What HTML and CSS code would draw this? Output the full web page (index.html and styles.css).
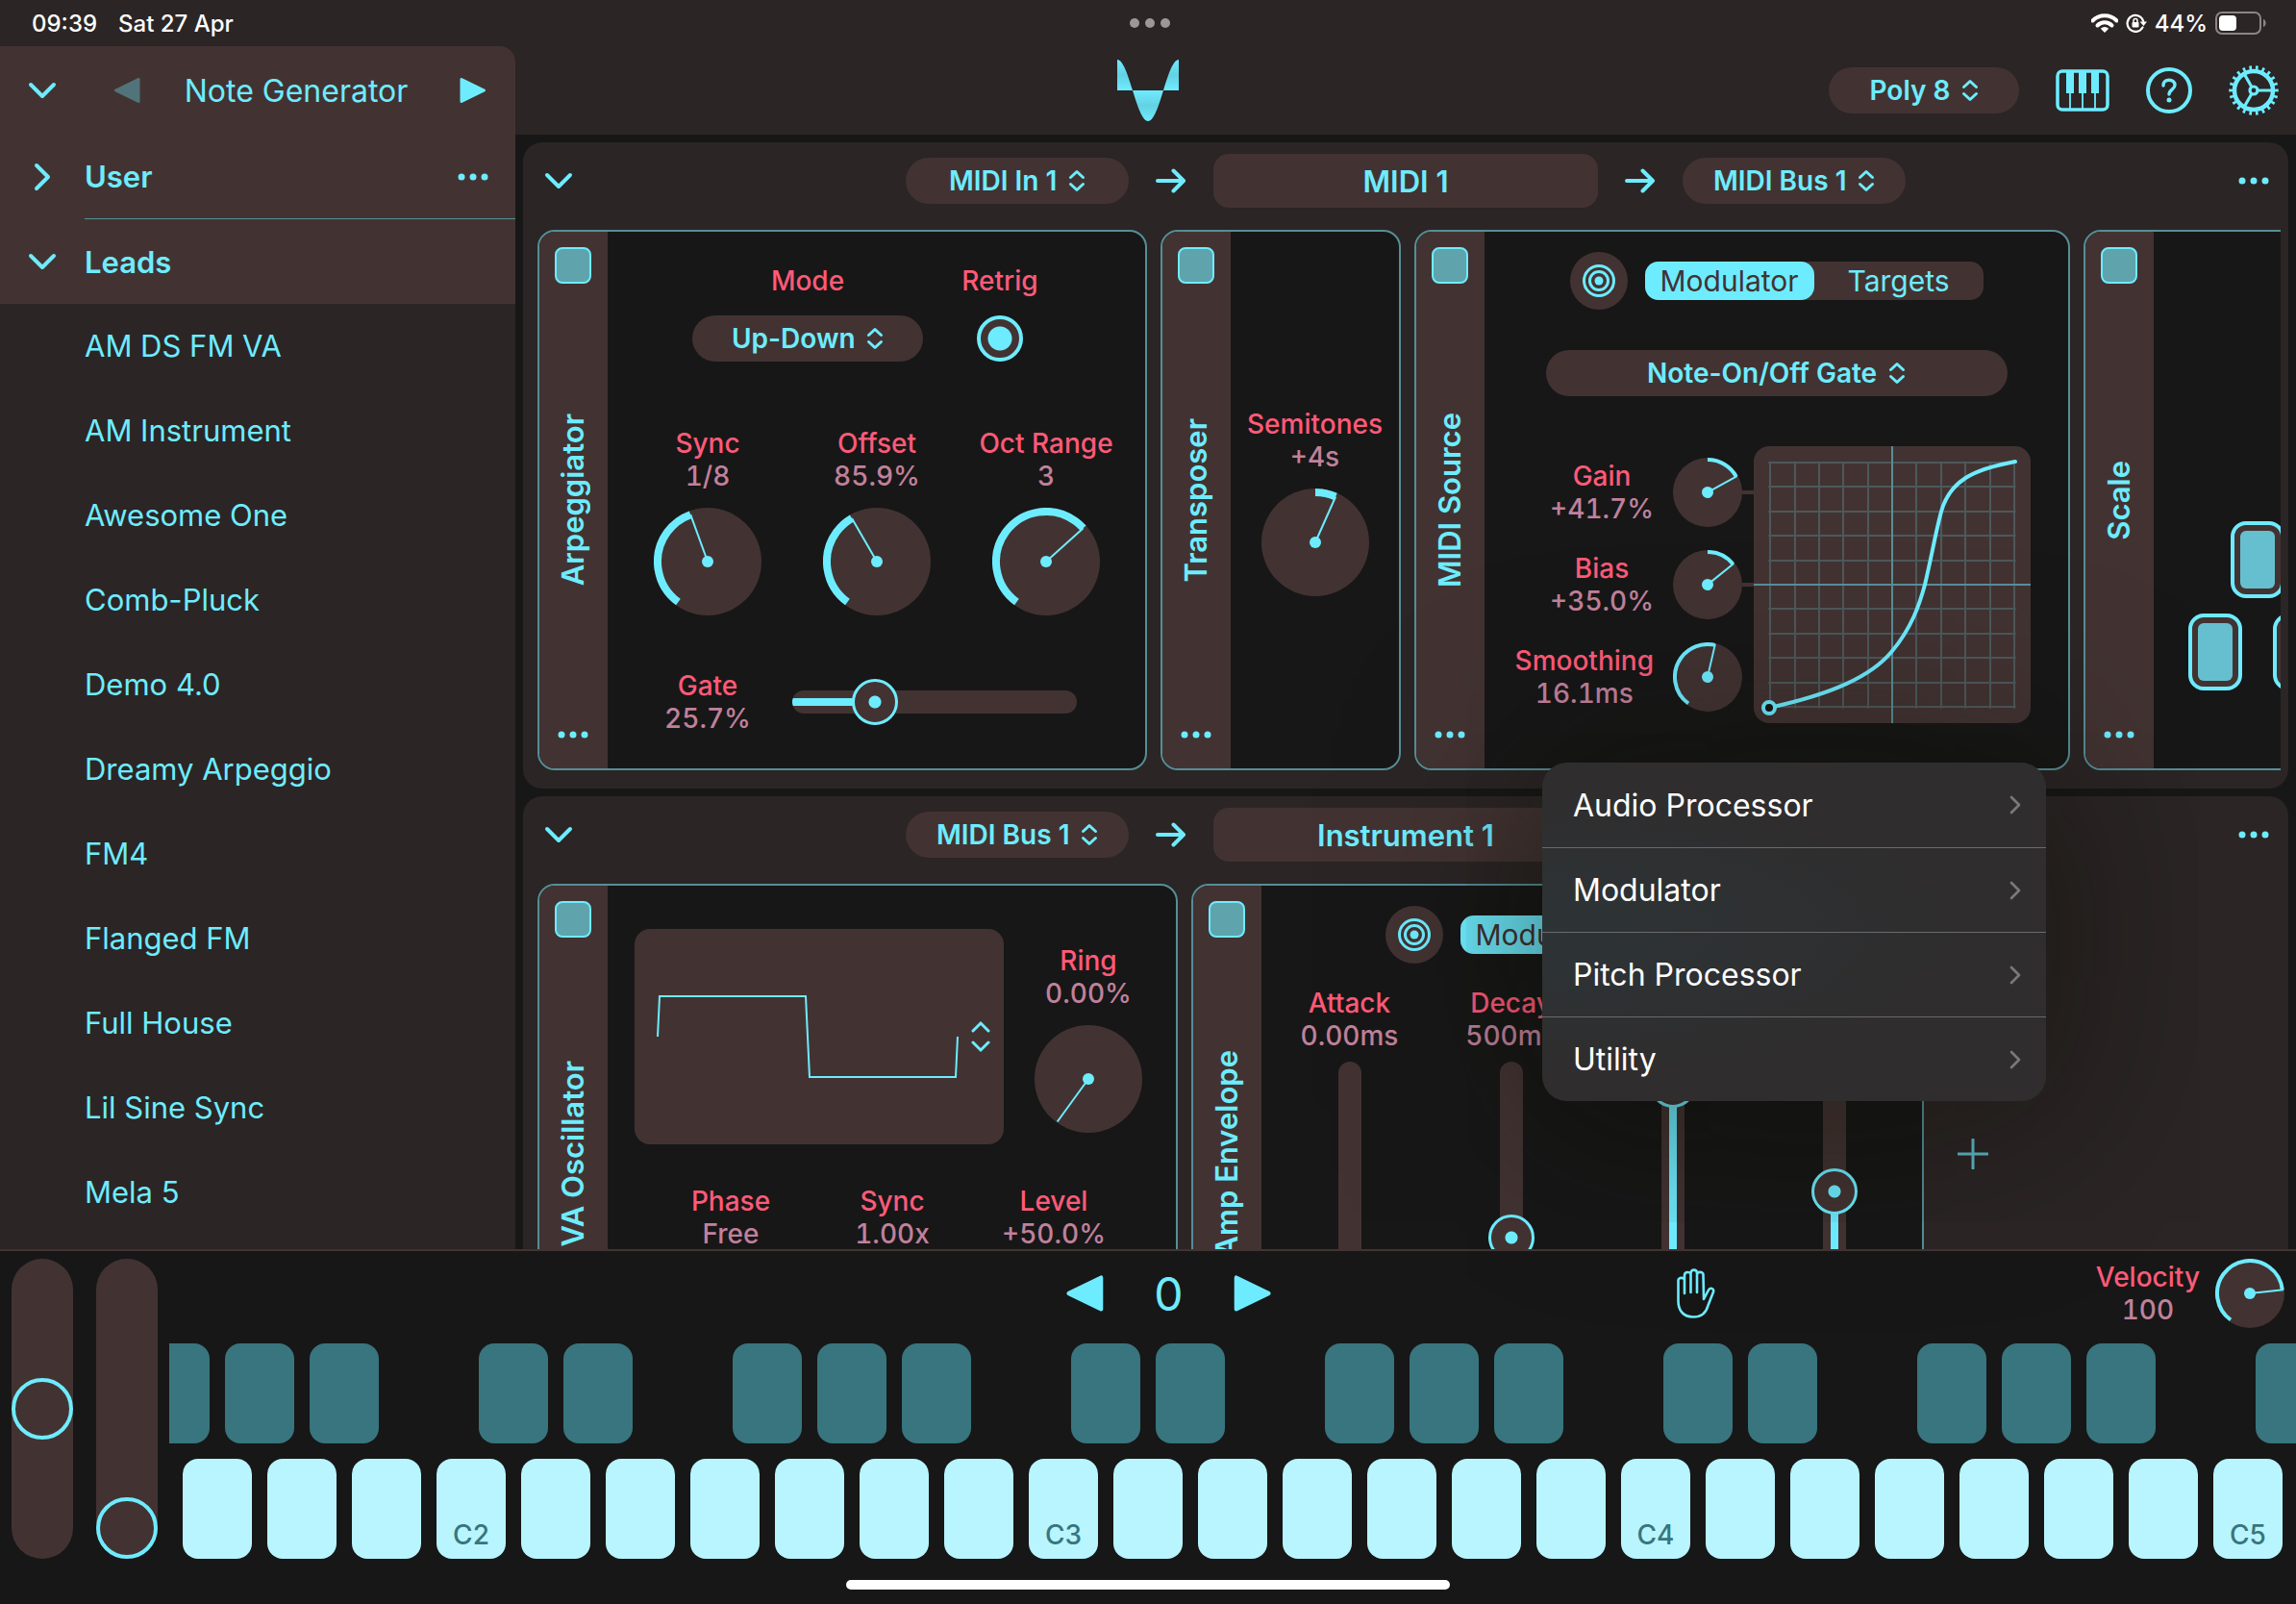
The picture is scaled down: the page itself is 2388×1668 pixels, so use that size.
FILE: index.html
```html
<!DOCTYPE html>
<html lang="en">
<head>
  <meta charset="UTF-8" />
  <meta name="viewport" content="width=device-width, initial-scale=1" />
  <title>Note Generator</title>
  <link rel="stylesheet" href="styles.css">
</head>
<body>
  <svg class="defs" width="0" height="0" aria-hidden="true">
    <symbol id="down" viewBox="0 0 30 18"><path d="M3 3l12 12L27 3" /></symbol>
    <symbol id="right" viewBox="0 0 18 30"><path d="M3 3l12 12L3 27" /></symbol>
    <symbol id="dots" viewBox="0 0 32 8"><g fill="currentColor" stroke="none"><circle cx="4" cy="4" r="3.5" /><circle cx="16" cy="4" r="3.5" /><circle cx="28" cy="4" r="3.5" /></g></symbol>
    <symbol id="updown" viewBox="0 0 18 24"><path d="M2.500 8.500L9 2.500l6.500 6M2.500 15.500l6.500 6 6.500-6" /></symbol>
    <symbol id="arrow" viewBox="0 0 32 26"><path d="M2 13h27M18.500 2.500L29 13 18.500 23.500" /></symbol>
    <symbol id="target" viewBox="0 0 36 36"><circle cx="18" cy="18" r="15.500" /><circle cx="18" cy="18" r="9.500" /><circle cx="18" cy="18" r="4.500" fill="currentColor" stroke="none" /></symbol>
    <symbol id="play" viewBox="0 0 28 28"><path d="M2 2.500v23L25.500 14z" fill="currentColor" stroke-width="3" /></symbol>
  </svg>

  <div class="status-bar">
    <div class="status-left"><span>09:39</span><span>Sat 27 Apr</span></div>
    <svg class="multitask" viewBox="0 0 42 10"><circle cx="5" cy="5" r="5" /><circle cx="21" cy="5" r="5" /><circle cx="37" cy="5" r="5" /></svg>
    <div class="status-right">
      <svg width="28" height="20" viewBox="0 0 28 20"><g fill="none" stroke="#fff" stroke-width="4"><path d="M1.500 7.500a17.500 17.500 0 0 1 25 0" /><path d="M6.500 12.500a10.500 10.500 0 0 1 15 0" /></g><path d="M14 20l-4.200-4.300a6 6 0 0 1 8.400 0z" fill="#fff" /></svg>
      <svg width="22" height="20" viewBox="0 0 22 20"><path d="M17.500 14.500A8.500 8.500 0 1 1 18.200 8" fill="none" stroke="#fff" stroke-width="2.200" /><path d="M14.500 8.500h7.500l-3.500 4.500z" fill="#fff" /><rect x="6.500" y="9" width="7" height="5.500" rx="1" fill="#fff" /><path d="M8 9V7.500a2 2 0 0 1 4 0V9" fill="none" stroke="#fff" stroke-width="1.500" /></svg>
      <span>44%</span>
      <svg width="54" height="24" viewBox="0 0 54 24"><rect x="1" y="1" width="46" height="22" rx="6" fill="none" stroke="#8b8685" stroke-width="2" /><rect x="4" y="4" width="18" height="16" rx="4" fill="#fff" /><path d="M50 8c3.500 1 3.500 7 0 8z" fill="#8b8685" /></svg>
    </div>
  </div>

  <div class="app">
    <header class="top-bar">
      <svg class="logo" viewBox="0 0 64 64">
        <defs>
          <linearGradient id="shade" x1="0" y1="0" x2="0" y2="1"><stop offset="0" stop-color="#6eecff" /><stop offset=".5" stop-color="#63d2e3" /><stop offset="1" stop-color="#6eecff" /></linearGradient>
        </defs>
        <path d="M0 0C6 0 11 16 16 32H0zM64 0c-6 0-11 16-16 32h16z" fill="url(#shade)" />
        <path d="M16 32h32C43 48 38 64 32 64S21 48 16 32z" fill="url(#shade)" />
      </svg>
      <div class="top-actions">
        <label class="picker picker-poly"><select aria-label="Polyphony"><option>Poly 8</option></select><svg class="updown"><use href="#updown" /></svg></label>
        <button class="icon-btn" aria-label="Keyboard">
          <svg width="56" height="44" viewBox="0 0 56 44"><rect x="2" y="2" width="52" height="40" rx="5" stroke-width="3.500" /><path d="M11 3h8v22h-8zM24 3h8v22h-8zM37 3h8v22h-8z" fill="currentColor" stroke="none" /><path d="M15 24v17M28 24v17M41 24v17" stroke-width="1.800" /></svg>
        </button>
        <button class="icon-btn" aria-label="Help">
          <svg width="48" height="48" viewBox="0 0 48 48"><circle cx="24" cy="24" r="22" stroke-width="4" /><path d="M18 19c0-4 2.600-5.800 6-5.800s6 2 6 5.300c0 4.500-6 4.700-6 9.500" stroke-width="3.400" /><circle cx="24" cy="34" r="2.500" fill="currentColor" stroke="none" /></svg>
        </button>
        <button class="icon-btn" aria-label="Settings">
          <svg width="52" height="52" viewBox="0 0 52 52"><circle cx="26" cy="26" r="20" stroke-width="4.500" /><circle cx="26" cy="26" r="23.500" pathLength="44" stroke-width="4.500" stroke-linecap="butt" stroke-dasharray=".8 1.2" stroke-dashoffset=".4" /><circle cx="26" cy="26" r="4" stroke-width="3.200" /><path d="M31 26h14M23.500 21.700L16.500 9.500M23.500 30.300l-7 12.200" stroke-width="3.200" /></svg>
        </button>
      </div>
    </header>

    <nav class="sidebar">
      <div class="sidebar-head">
        <button class="fold" aria-label="Collapse presets"><svg class="chevron"><use href="#down" /></svg></button>
        <button class="step step-prev" aria-label="Previous preset" disabled><svg class="play flip"><use href="#play" /></svg></button>
        <span class="preset-name">Note Generator</span>
        <button class="step" aria-label="Next preset"><svg class="play"><use href="#play" /></svg></button>
      </div>
      <div class="group">
        <button class="fold" aria-label="Expand User"><svg class="chevron-right"><use href="#right" /></svg></button>
        <div class="group-label ruled"><span>User</span><button class="more" aria-label="User options"><svg class="dots"><use href="#dots" /></svg></button></div>
      </div>
      <div class="group">
        <button class="fold" aria-label="Collapse Leads"><svg class="chevron"><use href="#down" /></svg></button>
        <div class="group-label"><span>Leads</span></div>
      </div>
      <a href="#">AM DS FM VA</a>
      <a href="#">AM Instrument</a>
      <a href="#">Awesome One</a>
      <a href="#">Comb-Pluck</a>
      <a href="#">Demo 4.0</a>
      <a href="#">Dreamy Arpeggio</a>
      <a href="#">FM4</a>
      <a href="#">Flanged FM</a>
      <a href="#">Full House</a>
      <a href="#">Lil Sine Sync</a>
      <a href="#">Mela 5</a>
    </nav>

    <main class="tracks">
      <section class="track">
        <div class="track-head">
          <button class="fold-track" aria-label="Collapse track"><svg class="chevron"><use href="#down" /></svg></button>
          <div class="route">
            <label class="picker"><select aria-label="MIDI input"><option>MIDI In 1</option></select><svg class="updown"><use href="#updown" /></svg></label>
            <svg class="arrow"><use href="#arrow" /></svg>
            <button class="track-title">MIDI 1</button>
            <svg class="arrow"><use href="#arrow" /></svg>
            <label class="picker"><select aria-label="MIDI output"><option>MIDI Bus 1</option></select><svg class="updown"><use href="#updown" /></svg></label>
          </div>
          <button class="more" aria-label="Track options"><svg class="dots"><use href="#dots" /></svg></button>
        </div>

        <div class="modules">
          <article class="module arp">
            <div class="strip"><input type="checkbox" class="power" aria-label="Arpeggiator on" checked><h3>Arpeggiator</h3><button class="more" aria-label="Arpeggiator options"><svg class="dots"><use href="#dots" /></svg></button></div>
            <div class="module-body">
              <div class="arp-mode">
                <div class="field"><label for="mode">Mode</label><span class="picker picker-mode"><select id="mode"><option>Up-Down</option></select><svg class="updown"><use href="#updown" /></svg></span></div>
                <div class="field field-retrig"><label for="retrig">Retrig</label><input type="checkbox" id="retrig" class="round-check" checked></div>
              </div>
              <div class="arp-knobs">
                <div class="param"><span>Sync</span><b>1/8</b><svg class="knob" viewBox="0 0 112 112"><circle class="dial" cx="56" cy="56" r="56" /><circle class="arc" cx="56" cy="56" r="52" pathLength="360" stroke-dasharray="124 360" transform="rotate(126 56 56)" /><path class="needle" d="M56 56V4" transform="rotate(-20 56 56)" /><circle class="hub" cx="56" cy="56" r="6" /></svg></div>
                <div class="param"><span>Offset</span><b>85.9%</b><svg class="knob" viewBox="0 0 112 112"><circle class="dial" cx="56" cy="56" r="56" /><circle class="arc" cx="56" cy="56" r="52" pathLength="360" stroke-dasharray="114 360" transform="rotate(126 56 56)" /><path class="needle" d="M56 56V4" transform="rotate(-30 56 56)" /><circle class="hub" cx="56" cy="56" r="6" /></svg></div>
                <div class="param"><span>Oct Range</span><b>3</b><svg class="knob" viewBox="0 0 112 112"><circle class="dial" cx="56" cy="56" r="56" /><circle class="arc" cx="56" cy="56" r="52" pathLength="360" stroke-dasharray="192 360" transform="rotate(126 56 56)" /><path class="needle" d="M56 56V4" transform="rotate(48 56 56)" /><circle class="hub" cx="56" cy="56" r="6" /></svg></div>
              </div>
              <div class="arp-gate">
                <label class="param" for="gate"><span>Gate</span><b>25.7%</b></label>
                <input type="range" id="gate" class="slider" min="0" max="100" step="0.1" value="25" style="--value: 25%">
              </div>
            </div>
          </article>

          <article class="module transposer">
            <div class="strip"><input type="checkbox" class="power" aria-label="Transposer on" checked><h3>Transposer</h3><button class="more" aria-label="Transposer options"><svg class="dots"><use href="#dots" /></svg></button></div>
            <div class="module-body">
              <div class="param"><span>Semitones</span><b>+4s</b><svg class="knob" viewBox="0 0 112 112"><circle class="dial" cx="56" cy="56" r="56" /><circle class="arc" cx="56" cy="56" r="52" pathLength="360" stroke-dasharray="24 360" transform="rotate(-90 56 56)" /><path class="needle" d="M56 56V4" transform="rotate(24 56 56)" /><circle class="hub" cx="56" cy="56" r="6" /></svg></div>
            </div>
          </article>

          <article class="module source">
            <div class="strip"><input type="checkbox" class="power" aria-label="MIDI Source on" checked><h3>MIDI Source</h3><button class="more" aria-label="MIDI Source options"><svg class="dots"><use href="#dots" /></svg></button></div>
            <div class="module-body">
              <div class="mod-head">
                <button class="target-btn" aria-label="Assign target"><svg><use href="#target" /></svg></button>
                <div class="segmented">
                  <label><input type="radio" name="source-view" checked><span>Modulator</span></label>
                  <label><input type="radio" name="source-view"><span>Targets</span></label>
                </div>
              </div>
              <label class="picker picker-wide"><select aria-label="Source"><option>Note-On/Off Gate</option></select><svg class="updown"><use href="#updown" /></svg></label>
              <div class="response">
                <div class="response-params">
                  <div class="side-param linked"><div class="param"><span>Gain</span><b>+41.7%</b></div><svg class="knob-small" viewBox="0 0 72 72"><circle class="dial" cx="36" cy="36" r="36" /><circle class="arc" cx="36" cy="36" r="34" pathLength="360" stroke-dasharray="61 360" transform="rotate(-90 36 36)" /><path class="needle" d="M36 36V1" transform="rotate(61 36 36)" /><circle class="hub" cx="36" cy="36" r="6" /></svg></div>
                  <div class="side-param linked"><div class="param"><span>Bias</span><b>+35.0%</b></div><svg class="knob-small" viewBox="0 0 72 72"><circle class="dial" cx="36" cy="36" r="36" /><circle class="arc" cx="36" cy="36" r="34" pathLength="360" stroke-dasharray="51 360" transform="rotate(-90 36 36)" /><path class="needle" d="M36 36V1" transform="rotate(51 36 36)" /><circle class="hub" cx="36" cy="36" r="6" /></svg></div>
                  <div class="side-param"><div class="param"><span>Smoothing</span><b>16.1ms</b></div><svg class="knob-small" viewBox="0 0 72 72"><circle class="dial" cx="36" cy="36" r="36" /><circle class="arc" cx="36" cy="36" r="34" pathLength="360" stroke-dasharray="157 360" transform="rotate(126 36 36)" /><path class="needle" d="M36 36V1" transform="rotate(13 36 36)" /><circle class="hub" cx="36" cy="36" r="6" /></svg></div>
                </div>
                <svg class="curve" viewBox="0 0 288 288">
                  <path class="grid" d="M17 17v255M43 17v255M68 17v255M93 17v255M119 17v255M169 17v255M195 17v255M220 17v255M246 17v255M271 17v255M16 17h256M16 42h256M16 68h256M16 93h256M16 119h256M16 169h256M16 195h256M16 220h256M16 246h256M16 271h256" />
                  <path class="axis" d="M144 0v288M0 144h288" />
                  <path class="shape" d="M16 272C80 258 122 240 144 213C164 189 172 166 178 144C186 110 188 95 195 68C204 36 228 24 272 16" />
                  <circle class="handle" cx="16" cy="272" r="6" />
                </svg>
              </div>
            </div>
          </article>

          <article class="module scale">
            <div class="strip"><input type="checkbox" class="power" aria-label="Scale on" checked><h3>Scale</h3><button class="more" aria-label="Scale options"><svg class="dots"><use href="#dots" /></svg></button></div>
            <div class="module-body">
              <div class="notes notes-sharp"><button class="note" aria-label="C sharp"></button><button class="note" aria-label="D sharp"></button></div>
              <div class="notes"><button class="note" aria-label="C"></button><button class="note" aria-label="D"></button><button class="note" aria-label="E"></button></div>
            </div>
          </article>
        </div>
      </section>

      <section class="track">
        <div class="track-head">
          <button class="fold-track" aria-label="Collapse track"><svg class="chevron"><use href="#down" /></svg></button>
          <div class="route">
            <label class="picker"><select aria-label="MIDI input"><option>MIDI Bus 1</option></select><svg class="updown"><use href="#updown" /></svg></label>
            <svg class="arrow"><use href="#arrow" /></svg>
            <button class="track-title">Instrument 1</button>
            <svg class="arrow"><use href="#arrow" /></svg>
            <label class="picker"><select aria-label="Audio output"><option></option></select><svg class="updown"><use href="#updown" /></svg></label>
          </div>
          <button class="more" aria-label="Track options"><svg class="dots"><use href="#dots" /></svg></button>
        </div>

        <div class="modules">
          <article class="module osc">
            <div class="strip"><input type="checkbox" class="power" aria-label="VA Oscillator on" checked><h3>VA Oscillator</h3><button class="more" aria-label="VA Oscillator options"><svg class="dots"><use href="#dots" /></svg></button></div>
            <div class="module-body">
              <div class="osc-top">
                <button class="wave" aria-label="Waveform">
                  <svg viewBox="0 0 384 224"><path d="M24 112l2-42h152l4 84h152l2-42" /><path d="M352 106l8-8 8 8M352 118l8 8 8-8" stroke-width="3" stroke-linecap="round" /></svg>
                </button>
                <div class="param"><span>Ring</span><b>0.00%</b><svg class="knob" viewBox="0 0 112 112"><circle class="dial" cx="56" cy="56" r="56" /><path class="needle" d="M56 56V1" transform="rotate(216 56 56)" /><circle class="hub" cx="56" cy="56" r="6" /></svg></div>
              </div>
              <div class="osc-knobs">
                <div class="param"><span>Phase</span><b>Free</b></div>
                <div class="param"><span>Sync</span><b>1.00x</b></div>
                <div class="param"><span>Level</span><b>+50.0%</b></div>
              </div>
            </div>
          </article>

          <article class="module envelope">
            <div class="strip"><input type="checkbox" class="power" aria-label="Amp Envelope on" checked><h3>Amp Envelope</h3><button class="more" aria-label="Amp Envelope options"><svg class="dots"><use href="#dots" /></svg></button></div>
            <div class="module-body">
              <div class="mod-head">
                <button class="target-btn" aria-label="Assign target"><svg><use href="#target" /></svg></button>
                <div class="segmented">
                  <label><input type="radio" name="env-view" checked><span>Modulator</span></label>
                  <label><input type="radio" name="env-view" aria-label="Targets"><span></span></label>
                </div>
              </div>
              <div class="adsr">
                <label class="param"><span>Attack</span><b>0.00ms</b><input type="range" class="fader" min="0" max="100" step="0.1" value="0" style="--value: 0%"></label>
                <label class="param"><span>Decay</span><b>500ms</b><input type="range" class="fader" min="0" max="100" step="0.1" value="47.7" style="--value: 47.7%"></label>
                <label class="param"><input type="range" class="fader" aria-label="Sustain" min="0" max="100" step="0.1" value="100" style="--value: 100%"></label>
                <label class="param"><input type="range" class="fader" aria-label="Release" min="0" max="100" step="0.1" value="63.5" style="--value: 63.5%"></label>
              </div>
            </div>
          </article>

          <button class="add" aria-label="Add module"><svg viewBox="0 0 32 32"><path d="M16 1v30M1 16h30" /></svg></button>
        </div>
      </section>
    </main>
  </div>

  <footer class="keyboard">
    <div class="play-area">
      <div class="wheels">
        <input type="range" class="wheel" aria-label="Pitch bend" min="0" max="100" value="50">
        <input type="range" class="wheel" aria-label="Modulation" min="0" max="100" value="0">
      </div>
      <div class="keys-area">
        <div class="key-controls">
          <div class="octave">
            <button class="step" aria-label="Octave down"><svg class="play-big flip"><use href="#play" /></svg></button>
            <span>0</span>
            <button class="step" aria-label="Octave up"><svg class="play-big"><use href="#play" /></svg></button>
          </div>
          <button class="icon-btn hold" aria-label="Hold">
            <svg width="40" height="52" viewBox="0 0 40 52"><path d="M8 26V12.500C8 9 1.500 9 1.500 12.500V34C1.500 44 7 50.500 17 50.500c8 0 13.500-4 15.500-12l5.500-14c1-4-3.500-5-5-2L28 32l-.5-25.500C27.500 3 21 3 21 6.500M14.500 25V5C14.500.5 21 .5 21 5v20M8 12V7c0-4 6.500-4 6.500-.5" stroke-width="2.600" /></svg>
          </button>
          <div class="velocity">
            <div class="param"><span>Velocity</span><b>100</b></div>
            <svg class="knob-small" viewBox="0 0 72 72"><circle class="dial" cx="36" cy="36" r="36" /><circle class="arc" cx="36" cy="36" r="34" pathLength="360" stroke-dasharray="228 360" transform="rotate(126 36 36)" /><path class="needle" d="M36 36V1" transform="rotate(84 36 36)" /><circle class="hub" cx="36" cy="36" r="6" /></svg>
          </div>
        </div>
        <div class="keys black-keys">
          <button></button><button></button><button></button><i></i><button></button><button></button><i></i>
          <button></button><button></button><button></button><i></i><button></button><button></button><i></i>
          <button></button><button></button><button></button><i></i><button></button><button></button><i></i>
          <button></button><button></button><button></button><i></i><button></button>
        </div>
        <div class="keys white-keys">
          <button></button><button></button><button></button>
          <button>C2</button><button></button><button></button><button></button><button></button><button></button><button></button>
          <button>C3</button><button></button><button></button><button></button><button></button><button></button><button></button>
          <button>C4</button><button></button><button></button><button></button><button></button><button></button><button></button>
          <button>C5</button>
        </div>
      </div>
    </div>
    <div class="home-bar"></div>
  </footer>

  <div class="menu" role="menu">
    <button role="menuitem">Audio Processor<svg><use href="#right" /></svg></button>
    <button role="menuitem">Modulator<svg><use href="#right" /></svg></button>
    <button role="menuitem">Pitch Processor<svg><use href="#right" /></svg></button>
    <button role="menuitem">Utility<svg><use href="#right" /></svg></button>
  </div>
</body>
</html>
```
FILE: styles.css
```css
:root {
  --bg: #171717;
  --panel: #2b2525;
  --brown: #423332;
  --cyan: #6eecff;
  --line: #558e97;
  --pink: #ff5a78;
  --mauve: #c0819b;
}
* {
  margin: 0;
  padding: 0;
  box-sizing: border-box;
}
body {
  background-color: var(--bg);
  color: var(--cyan);
  font-family: Inter, "Liberation Sans", sans-serif;
  font-size: 31px;
  height: 100vh;
  display: flex;
  flex-direction: column;
  overflow: hidden;
  position: relative;
}
button, select, input {
  font: inherit;
  color: inherit;
  background: none;
  border: none;
  appearance: none;
  outline: none;
}
svg {
  display: block;
  flex-shrink: 0;
  fill: none;
  stroke: currentColor;
  stroke-width: 4;
  stroke-linecap: round;
  stroke-linejoin: round;
}
.defs {
  position: absolute;
}

/* status bar */
.status-bar {
  background-color: var(--panel);
  color: white;
  height: 48px;
  padding: 0 30px 0 33px;
  display: grid;
  grid-template-columns: 1fr auto 1fr;
  align-items: center;
  font-size: 24px;
  font-weight: 500;
}
.status-left {
  display: flex;
  gap: 22px;
}
.status-right {
  display: flex;
  justify-content: flex-end;
  align-items: center;
  gap: 8px;
}
.status-right svg, .multitask, .logo {
  stroke: none;
}
.multitask {
  width: 42px;
  fill: #9f9797;
}

/* app frame */
.app {
  flex: 1;
  min-height: 0;
  display: grid;
  grid-template-columns: 536px 1fr;
  grid-template-rows: 92px 1fr;
  overflow: hidden;
}
.top-bar {
  grid-area: 1 / 1 / 2 / 3;
  background-color: var(--panel);
  display: grid;
  grid-template-columns: 1fr auto 1fr;
  align-items: center;
}
.logo {
  grid-column: 2;
  width: 64px;
  height: 64px;
}
.top-actions {
  display: flex;
  justify-content: flex-end;
  align-items: center;
  gap: 38px;
  padding-right: 18px;
}

/* sidebar */
.sidebar {
  grid-area: 1 / 1 / 3 / 2;
  z-index: 1;
  min-height: 0;
  background-color: var(--panel);
  border-top-right-radius: 16px;
  overflow: hidden;
}
.sidebar-head, .group {
  background-color: var(--brown);
  display: flex;
  align-items: center;
}
.sidebar-head {
  height: 92px;
  font-size: 32px;
}
.fold {
  width: 88px;
  display: grid;
  place-items: center;
}
.chevron {
  width: 30px;
  height: 18px;
}
.chevron-right {
  width: 18px;
  height: 30px;
}
.step-prev {
  margin-left: 30px;
  opacity: 0.35;
}
.preset-name {
  flex: 1;
  text-align: center;
  padding-right: 8px;
}
.play {
  width: 28px;
  height: 28px;
}
.sidebar-head .step:last-child {
  margin-right: 30px;
}
.flip {
  transform: scaleX(-1);
}
.group {
  height: 88px;
  font-weight: 600;
}
.group-label {
  flex: 1;
  height: 88px;
  display: flex;
  justify-content: space-between;
  align-items: center;
  padding-right: 28px;
}
.ruled {
  border-bottom: 1px solid var(--line);
}
.dots {
  width: 32px;
  height: 8px;
}
.sidebar a {
  display: block;
  height: 88px;
  line-height: 88px;
  padding-left: 88px;
  color: var(--cyan);
  text-decoration: none;
}

/* tracks */
.tracks {
  grid-area: 2 / 2 / 3 / 3;
  min-width: 0;
  min-height: 0;
  padding: 8px 8px 0;
  display: flex;
  flex-direction: column;
  gap: 8px;
  overflow: hidden;
}
.track {
  background-color: var(--panel);
  border-radius: 20px;
  padding: 0 8px 19px 15px;
  flex-shrink: 0;
}
.track-head {
  height: 91px;
  padding-bottom: 11px;
  display: grid;
  grid-template-columns: 1fr auto 1fr;
  align-items: center;
  margin-left: -7px;
}
.fold-track {
  justify-self: start;
  margin-left: 14px;
}
.track-head .more {
  justify-self: end;
  margin-right: 12px;
}
.route {
  display: flex;
  align-items: center;
}
.arrow {
  width: 32px;
  height: 26px;
  margin: 0 28px;
}
.track-title {
  width: 400px;
  height: 56px;
  background-color: var(--brown);
  border-radius: 16px;
  font-weight: 600;
}
.picker {
  width: 232px;
  height: 48px;
  background-color: var(--brown);
  border-radius: 24px;
  display: flex;
  justify-content: center;
  align-items: center;
  gap: 11px;
  font-size: 28px;
  font-weight: 600;
}
.picker-poly {
  width: 198px;
}
.picker-mode {
  width: 240px;
}
.picker-wide {
  width: 480px;
}
.updown {
  width: 18px;
  height: 24px;
  stroke-width: 3;
}

/* modules */
.modules {
  display: flex;
  gap: 14px;
  overflow: hidden;
}
.module {
  flex-shrink: 0;
  height: 562px;
  border: 2px solid var(--line);
  border-radius: 18px;
  background-color: var(--bg);
  display: flex;
  overflow: hidden;
}
.strip {
  width: 71px;
  background-color: var(--brown);
  display: grid;
  grid-template-rows: 1fr auto 1fr;
  justify-items: center;
  padding: 16px 1px 16px 0;
}
.strip .more {
  align-self: end;
  padding-bottom: 15px;
}
.strip h3 {
  writing-mode: vertical-rl;
  transform: rotate(180deg);
  font-size: 31px;
  font-weight: 600;
  line-height: 40px;
}
.power {
  width: 38px;
  height: 38px;
  border: 2px solid var(--cyan);
  border-radius: 8px;
  background-color: #5fa3ad;
}
.module-body {
  flex: 1;
  min-width: 0;
}
.param, .field {
  display: flex;
  flex-direction: column;
  align-items: center;
  font-size: 28px;
  font-weight: 500;
  line-height: 34px;
  color: var(--pink);
  white-space: nowrap;
}
.param b {
  font-weight: 500;
  color: var(--mauve);
  font-variant-numeric: tabular-nums;
}
.knob {
  width: 112px;
  height: 112px;
  margin-top: 16px;
}
.knob-small {
  width: 72px;
  height: 72px;
}
.dial {
  fill: var(--brown);
  stroke: none;
}
.arc {
  stroke: var(--cyan);
  stroke-width: 8;
  stroke-linecap: butt;
}
.knob-small .arc {
  stroke-width: 4;
}
.needle {
  stroke: var(--cyan);
  stroke-width: 2;
  stroke-linecap: butt;
}
.hub {
  fill: var(--cyan);
  stroke: none;
}

/* arpeggiator */
.arp {
  width: 634px;
}
.arp .module-body {
  padding: 34px 16px 0;
}
.arp-mode {
  display: flex;
  padding-left: 72px;
}
.field {
  gap: 19px;
}
.field .picker {
  color: var(--cyan);
}
.field-retrig {
  width: 160px;
}
.round-check {
  width: 48px;
  height: 48px;
  border: 4px solid var(--cyan);
  border-radius: 50%;
  background: radial-gradient(circle, var(--cyan) 12px, var(--brown) 13px);
}
.arp-knobs {
  display: grid;
  grid-template-columns: repeat(3, 176px);
  margin-top: 68px;
}
.arp-gate {
  display: flex;
  align-items: center;
  margin-top: 56px;
}
.arp-gate .param {
  width: 176px;
}
.slider {
  width: 296px;
  height: 48px;
}
.slider::-webkit-slider-runnable-track {
  height: 24px;
  border-radius: 12px;
  background: linear-gradient(var(--cyan), var(--cyan)) 0 50% / var(--value) 8px no-repeat var(--brown);
}
.slider::-webkit-slider-thumb {
  appearance: none;
  width: 48px;
  height: 48px;
  margin-top: -12px;
  border: 3px solid var(--cyan);
  border-radius: 50%;
  background: radial-gradient(circle, var(--cyan) 6px, var(--brown) 7px);
}

/* transposer */
.transposer {
  width: 250px;
}
.transposer .module-body {
  display: grid;
  place-items: center;
  padding-top: 4px;
}

/* midi source */
.source {
  width: 682px;
}
.source .module-body, .envelope .module-body {
  display: flex;
  flex-direction: column;
  align-items: center;
  padding-top: 21px;
}
.mod-head {
  display: flex;
  align-items: center;
  gap: 18px;
}
.target-btn {
  width: 60px;
  height: 60px;
  border-radius: 50%;
  background-color: var(--brown);
  display: grid;
  place-items: center;
}
.target-btn svg {
  width: 36px;
  height: 36px;
  stroke-width: 3;
}
.segmented {
  display: flex;
  background-color: var(--brown);
  border-radius: 14px;
}
.segmented label {
  width: 176px;
  display: grid;
  font-size: 30px;
}
.segmented input {
  grid-area: 1 / 1;
}
.segmented span {
  grid-area: 1 / 1;
  line-height: 40px;
  text-align: center;
  border-radius: 14px;
}
.segmented input:checked + span {
  background-color: var(--cyan);
  color: var(--brown);
}
.source .picker {
  margin: 42px 0 52px;
}
.response {
  display: flex;
  align-self: flex-end;
  margin-right: 39px;
}
.response-params {
  display: flex;
  flex-direction: column;
  gap: 24px;
  padding-top: 12px;
}
.side-param {
  display: flex;
  justify-content: flex-end;
  align-items: center;
}
.side-param .param {
  margin-right: 20px;
}
.side-param::after {
  content: "";
  width: 12px;
  height: 4px;
}
.linked::after {
  background-color: var(--brown);
}
.curve {
  width: 288px;
  height: 288px;
  border-radius: 16px;
  background-color: var(--brown);
}
.grid {
  stroke: #4d585b;
  stroke-width: 2;
}
.axis {
  stroke: #588e98;
  stroke-width: 2;
}
.shape {
  stroke-width: 4;
}
.handle {
  fill: var(--bg);
  stroke-width: 4;
}

/* scale */
.scale {
  width: 480px;
}
.scale .module-body {
  padding: 301px 0 0 36px;
}
.notes {
  display: flex;
  gap: 32px;
}
.notes-sharp {
  margin: 0 0 16px 44px;
}
.note {
  width: 56px;
  height: 80px;
  border: 4px solid var(--cyan);
  border-radius: 16px;
  background-color: var(--brown);
  padding: 6px;
}
.note::before {
  content: "";
  display: block;
  height: 60px;
  border-radius: 6px;
  background-color: #66bfce;
}

/* oscillator */
.osc {
  width: 666px;
}
.osc .module-body {
  padding: 45px 0 0 28px;
}
.osc-top {
  display: flex;
}
.osc-top .param {
  width: 176px;
  padding-top: 16px;
}
.wave {
  width: 384px;
  height: 224px;
  border-radius: 16px;
  background-color: var(--brown);
}
.wave svg {
  stroke-width: 2;
  stroke-linejoin: miter;
  stroke-linecap: butt;
}
.osc-knobs {
  display: grid;
  grid-template-columns: repeat(3, 168px);
  margin: 42px 0 0 16px;
}

/* envelope */
.envelope {
  width: 762px;
}
.adsr {
  display: grid;
  grid-template-columns: repeat(4, 168px);
  align-items: end;
  margin-top: 24px;
}
.fader {
  writing-mode: vertical-lr;
  direction: rtl;
  width: 48px;
  height: 352px;
  margin-top: 10px;
}
.fader::-webkit-slider-runnable-track {
  width: 24px;
  border-radius: 12px;
  background: linear-gradient(var(--cyan), var(--cyan)) 50% 100% / 8px var(--value) no-repeat var(--brown);
}
.fader::-webkit-slider-thumb {
  appearance: none;
  width: 48px;
  height: 48px;
  margin-left: -12px;
  border: 3px solid var(--cyan);
  border-radius: 50%;
  background: radial-gradient(circle, var(--cyan) 6px, var(--brown) 7px);
}
.add {
  width: 74px;
  display: grid;
  place-items: center;
}
.add svg {
  width: 32px;
  height: 32px;
  stroke-width: 3;
  opacity: 0.75;
}

/* keyboard */
.keyboard {
  border-top: 2px solid var(--brown);
  background-color: var(--bg);
  flex-shrink: 0;
}
.play-area {
  display: flex;
  gap: 12px;
  padding: 8px 0 22px 12px;
}
.wheels {
  display: flex;
  gap: 24px;
}
.wheel {
  writing-mode: vertical-lr;
  direction: rtl;
  width: 64px;
  height: 312px;
  border-radius: 32px;
  background-color: var(--brown);
}
.wheel::-webkit-slider-thumb {
  appearance: none;
  width: 64px;
  height: 64px;
  border: 4px solid var(--cyan);
  border-radius: 50%;
  background-color: var(--brown);
}
.keys-area {
  flex: 1;
  min-width: 0;
  overflow: hidden;
}
.key-controls {
  height: 72px;
  margin-bottom: 16px;
  padding-right: 12px;
  display: grid;
  grid-template-columns: 934fr 215fr 422fr 40fr 397fr auto;
  align-items: center;
}
.octave {
  grid-column: 2;
  display: flex;
  align-items: center;
  justify-content: space-between;
  font-size: 48px;
}
.play-big {
  width: 40px;
  height: 40px;
}
.hold {
  grid-column: 4;
}
.velocity {
  grid-column: 6;
  display: flex;
  align-items: center;
  gap: 16px;
}
.keys {
  display: flex;
  gap: 16px;
}
.keys > * {
  width: 72px;
  height: 104px;
  flex-shrink: 0;
  border-radius: 16px;
}
.black-keys {
  margin: 0 0 16px -30px;
}
.black-keys button {
  background-color: #38757e;
}
.white-keys {
  padding-left: 14px;
}
.white-keys button {
  background-color: #b8f5ff;
  color: #38757e;
  font-size: 28px;
  font-weight: 500;
  padding-top: 54px;
}
.home-bar {
  width: 628px;
  height: 10px;
  margin: 0 auto 15px;
  border-radius: 5px;
  background-color: white;
}

/* add-module menu */
.menu {
  position: absolute;
  top: 793px;
  right: 260px;
  width: 524px;
  border-radius: 26px;
  background: radial-gradient(ellipse at 0 50%, #2d3436, #2f2d2e 60%);
  box-shadow: 0 10px 200px rgba(10, 12, 2, 0.6);
  overflow: hidden;
}
.menu button {
  width: 100%;
  height: 88px;
  padding: 0 26px 0 32px;
  display: flex;
  justify-content: space-between;
  align-items: center;
  color: white;
  font-size: 32px;
}
.menu button + button {
  border-top: 1px solid #6b6a6b;
}
.menu svg {
  width: 12px;
  height: 20px;
  color: #7a797a;
}
```
